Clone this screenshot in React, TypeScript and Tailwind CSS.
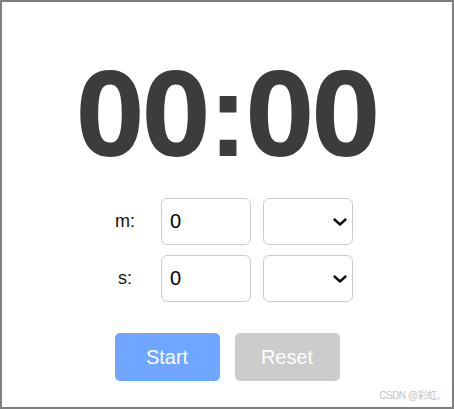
import React from "react";

// chevron used inside the empty selects
function Chevron() {
  return (
    <svg width="14" height="8" viewBox="0 0 14 8" className="pointer-events-none absolute right-[6px] top-1/2 -translate-y-1/2">
      <path d="M1.5 1.5 L7 6.5 L12.5 1.5" fill="none" stroke="#111" strokeWidth="2.4" strokeLinecap="round" strokeLinejoin="round" />
    </svg>
  );
}

function Row({ label }: { label: string }) {
  return (
    <div className="flex items-center">
      <div className="w-[46px] text-center text-[18px] text-[#111]">{label}</div>
      <input
        defaultValue="0"
        className="ml-[13px] h-[47px] w-[90px] rounded-[6px] border border-[#cccccc] pl-[8px] text-[20px] text-black outline-none"
      />
      <div className="relative ml-[12px]">
        <select className="h-[47px] w-[90px] appearance-none rounded-[6px] border border-[#cccccc] bg-white outline-none">
          <option value=""></option>
        </select>
        <Chevron />
      </div>
    </div>
  );
}

export default function App() {
  return (
    <div
      className="relative flex h-[409px] w-[454px] flex-col items-center border-2 border-[#7f7f7f] bg-white pt-[48px]"
      style={{ fontFamily: '"Liberation Sans", Arial, sans-serif' }}
    >
      {/* timer */}
      <div
        className="h-[120px] text-[119px] font-bold leading-[120px] tracking-[-2px] text-[#3c3c3c]"
        style={{ fontFamily: '"Open Sans", sans-serif' }}
      >
        00<span style={{ fontFamily: '"Liberation Sans", sans-serif' }}>:</span>00
      </div>

      <div className="mt-[28px] ml-[1px] flex flex-col gap-[10px]">
        <Row label="m:" />
        <Row label="s:" />
      </div>

      <div className="mt-[31px] flex gap-[15px]">
        <button className="h-[48px] w-[105px] rounded-[5px] bg-[#6fa6ff] text-[20px] text-white">Start</button>
        <button className="h-[48px] w-[105px] rounded-[5px] bg-[#cccccc] text-[20px] text-white">Reset</button>
      </div>

      {/* watermark */}
      <div
        className="absolute bottom-[4px] right-[6px] text-[10px] tracking-[-0.5px] text-[#c4c4c4]"
        style={{ fontFamily: '"Liberation Sans", "Noto Sans CJK SC", sans-serif' }}
      >
        CSDN @彩虹、
      </div>
    </div>
  );
}
